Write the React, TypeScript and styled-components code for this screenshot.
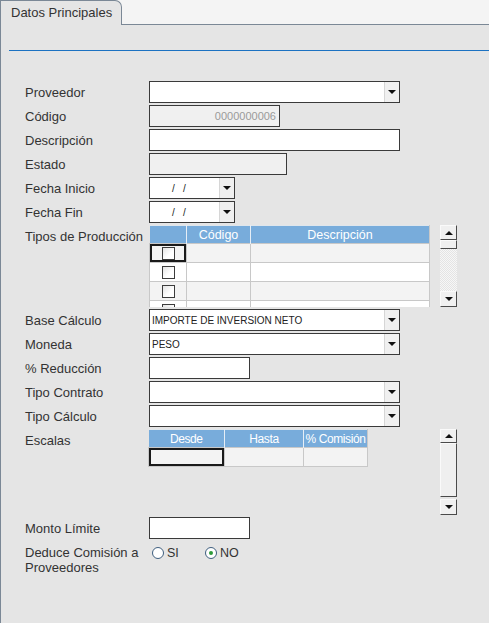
import { FC } from 'react';
import styled, { createGlobalStyle } from 'styled-components';

const GlobalStyle = createGlobalStyle`
  html, body {
    margin: 0;
    padding: 0;
    background: #e5e5e5;
  }
  body {
    font-family: 'Liberation Sans', Arial, sans-serif;
    color: #333;
  }
  * {
    box-sizing: border-box;
  }
`;

const Page = styled.div`
  width: 489px;
  min-height: 623px;
  display: flex;
  flex-direction: column;
`;

const TabStrip = styled.div`
  height: 25px;
  display: flex;
  align-items: flex-end;
  background: #f4f4f4;
  border-bottom: 1px solid #7b8896;
`;

const Tab = styled.div`
  width: 122px;
  height: 25px;
  margin-bottom: -1px;
  padding-left: 10px;
  background: #e5e5e5;
  border: 1px solid #7b8896;
  border-bottom: 0;
  border-top-right-radius: 7px;
  font-size: 13px;
  line-height: 24px;
  color: #333;
`;

const Panel = styled.div`
  flex: 1;
  min-height: 598px;
  background: #e5e5e5;
  border-left: 1px solid #7b8896;
  padding-top: 25px;
`;

const Rule = styled.div`
  height: 1px;
  margin-left: 8px;
  background: #1c72c2;
`;

const Form = styled.div`
  margin-top: 30px;
  padding-left: 24px;
  display: flex;
  flex-direction: column;
  gap: 2px;
`;

const Row = styled.div`
  display: flex;
  align-items: flex-start;
`;

const Label = styled.div`
  width: 124px;
  flex: none;
  font-size: 13px;
  line-height: 15px;
  padding-top: 4px;
  color: #333;
`;

const Box = styled.div<{ $w: number; $disabled?: boolean }>`
  width: ${({ $w }) => $w}px;
  height: 22px;
  display: flex;
  align-items: center;
  background: ${({ $disabled }) => ($disabled ? '#f0f0f0' : '#fff')};
  border: 1px solid #3a3a3a;
  font-size: 10px;
  color: #222;
  overflow: hidden;
`;

const BoxText = styled.div<{ $right?: boolean; $muted?: boolean; $pad?: number }>`
  flex: 1;
  padding: 0 ${({ $right }) => ($right ? 3 : 0)}px 0 ${({ $pad }) => $pad ?? 2}px;
  text-align: ${({ $right }) => ($right ? 'right' : 'left')};
  font-size: ${({ $muted }) => ($muted ? 11 : 10)}px;
  color: ${({ $muted }) => ($muted ? '#9a9a9a' : '#222')};
  white-space: pre;
`;

const DropButton = styled.div`
  width: 15px;
  height: 100%;
  flex: none;
  display: flex;
  align-items: center;
  justify-content: center;
  background: #f0f0f0;
  border-left: 1px solid #d6d6d6;
`;

const Arrow = styled.div<{ $up?: boolean }>`
  width: 0;
  height: 0;
  border-left: 4px solid transparent;
  border-right: 4px solid transparent;
  ${({ $up }) => ($up ? 'border-bottom: 4px solid #111;' : 'border-top: 4px solid #111;')}
`;

const Block = styled.div<{ $h: number }>`
  width: 308px;
  height: ${({ $h }) => $h}px;
  display: flex;
  justify-content: space-between;
  align-items: flex-start;
`;

const GridClip = styled.div<{ $w: number; $h: number; $shift?: number }>`
  width: ${({ $w }) => $w}px;
  height: ${({ $h }) => $h}px;
  margin-left: ${({ $shift }) => $shift ?? 0}px;
  overflow: hidden;
`;

const Table = styled.table<{ $size: number; $tight?: boolean }>`
  width: 100%;
  border-collapse: collapse;
  table-layout: fixed;
  font-size: ${({ $size }) => $size}px;
  letter-spacing: ${({ $tight }) => ($tight ? '-0.4px' : 'normal')};
`;

const Th = styled.th<{ $w?: number }>`
  width: ${({ $w }) => ($w ? `${$w}px` : 'auto')};
  height: 18px;
  padding: 0;
  background: #78acdb;
  color: #fff;
  font-weight: normal;
  text-align: center;
  border-right: 1px solid #e6eef6;
  border-top: 1px solid #dfe6ec;
  white-space: nowrap;
  &:last-child {
    border-right: 1px solid #c8c8c8;
  }
`;

const Td = styled.td<{ $alt?: boolean; $selected?: boolean }>`
  height: 19px;
  padding: 0;
  background: ${({ $alt }) => ($alt ? '#f3f3f3' : '#fff')};
  border: 1px solid #c8c8c8;
  text-align: center;
  ${({ $selected }) => $selected && 'box-shadow: inset 0 0 0 2px #1a1a1a;'}
`;

const Check = styled.div`
  width: 13px;
  height: 13px;
  margin: 0 auto;
  border: 1px solid #3c3c3c;
  background: linear-gradient(135deg, #e4e4e4, #ffffff 60%);
`;

const ScrollBar = styled.div<{ $h: number }>`
  width: 17px;
  height: ${({ $h }) => $h}px;
  display: flex;
  flex-direction: column;
`;

const ScrollButton = styled.div<{ $h: number }>`
  height: ${({ $h }) => $h}px;
  flex: none;
  display: flex;
  align-items: center;
  justify-content: center;
  background: #f0f0f0;
  border: 1px solid;
  border-color: #fafafa #4a4a4a #4a4a4a #fafafa;
`;

const Thumb = styled.div<{ $h?: number }>`
  ${({ $h }) => ($h ? `height: ${$h}px; flex: none;` : 'flex: 1;')}
  background: #efefef;
  border: 1px solid;
  border-color: #fafafa #4a4a4a #4a4a4a #fafafa;
`;

const Track = styled.div<{ $dotted?: boolean; $h?: number }>`
  ${({ $h }) => ($h ? `height: ${$h}px; flex: none;` : 'flex: 1;')}
  background: ${({ $dotted }) =>
    $dotted ? 'repeating-conic-gradient(#e4e4e4 0 25%, #f7f7f7 0 50%) 0 0 / 2px 2px' : 'transparent'};
`;

const RadioGroup = styled.div`
  display: flex;
  align-items: center;
  padding: 5px 0 0 3px;
  font-size: 12.5px;
  color: #333;
`;

const RadioItem = styled.label<{ $w: number }>`
  width: ${({ $w }) => $w}px;
  display: flex;
  align-items: center;
  gap: 3px;
`;

const RadioDot = styled.span<{ $on?: boolean }>`
  width: 12px;
  height: 12px;
  border-radius: 50%;
  border: 1px solid #3f5f7f;
  background: #fff;
  display: inline-flex;
  align-items: center;
  justify-content: center;
  &::after {
    content: '';
    width: 4px;
    height: 4px;
    border-radius: 50%;
    background: ${({ $on }) => ($on ? '#2e9a3a' : 'transparent')};
  }
`;

const Select: FC<{ w: number; value?: string; pad?: number }> = ({ w, value = '', pad }) => (
  <Box $w={w}>
    <BoxText $pad={pad}>{value}</BoxText>
    <DropButton>
      <Arrow />
    </DropButton>
  </Box>
);

const produccion = [0, 1, 2, 3];

export default function App() {
  return (
    <Page>
      <GlobalStyle />
      <TabStrip>
        <Tab>Datos Principales</Tab>
      </TabStrip>
      <Panel>
        <Rule />
        <Form>
          <Row>
            <Label>Proveedor</Label>
            <Select w={251} />
          </Row>
          <Row>
            <Label>Código</Label>
            <Box $w={131} $disabled>
              <BoxText $right $muted>0000000006</BoxText>
            </Box>
          </Row>
          <Row>
            <Label>Descripción</Label>
            <Box $w={251} />
          </Row>
          <Row>
            <Label>Estado</Label>
            <Box $w={138} $disabled />
          </Row>
          <Row>
            <Label>Fecha Inicio</Label>
            <Select w={86} value={'/   /'} pad={22} />
          </Row>
          <Row>
            <Label>Fecha Fin</Label>
            <Select w={86} value={'/   /'} pad={22} />
          </Row>
          <Row>
            <Label>Tipos de Producción</Label>
            <Block $h={82}>
              <GridClip $w={281} $h={82}>
                <Table $size={12.5}>
                  <thead>
                    <tr>
                      <Th $w={37}></Th>
                      <Th $w={64}>Código</Th>
                      <Th>Descripción</Th>
                    </tr>
                  </thead>
                  <tbody>
                    {produccion.map((i) => (
                      <tr key={i}>
                        <Td $alt={i % 2 === 0} $selected={i === 0}>
                          <Check />
                        </Td>
                        <Td $alt={i % 2 === 0} />
                        <Td $alt={i % 2 === 0} />
                      </tr>
                    ))}
                  </tbody>
                </Table>
              </GridClip>
              <ScrollBar $h={82}>
                <ScrollButton $h={15}>
                  <Arrow $up />
                </ScrollButton>
                <Thumb $h={9} />
                <Track $dotted />
                <ScrollButton $h={16}>
                  <Arrow />
                </ScrollButton>
              </ScrollBar>
            </Block>
          </Row>
          <Row>
            <Label>Base Cálculo</Label>
            <Select w={251} value="IMPORTE DE INVERSION NETO" />
          </Row>
          <Row>
            <Label>Moneda</Label>
            <Select w={251} value="PESO" />
          </Row>
          <Row>
            <Label>% Reducción</Label>
            <Box $w={101} />
          </Row>
          <Row>
            <Label>Tipo Contrato</Label>
            <Select w={251} />
          </Row>
          <Row>
            <Label>Tipo Cálculo</Label>
            <Select w={251} />
          </Row>
          <Row>
            <Label>Escalas</Label>
            <Block $h={86}>
              <GridClip $w={220} $h={38} $shift={-1}>
                <Table $size={12} $tight>
                  <thead>
                    <tr>
                      <Th $w={76}>Desde</Th>
                      <Th $w={79}>Hasta</Th>
                      <Th>% Comisión</Th>
                    </tr>
                  </thead>
                  <tbody>
                    <tr>
                      <Td $alt $selected />
                      <Td $alt />
                      <Td $alt />
                    </tr>
                  </tbody>
                </Table>
              </GridClip>
              <ScrollBar $h={86}>
                <ScrollButton $h={14}>
                  <Arrow $up />
                </ScrollButton>
                <Thumb />
                <Track $h={2} />
                <ScrollButton $h={16}>
                  <Arrow />
                </ScrollButton>
              </ScrollBar>
            </Block>
          </Row>
          <Row>
            <Label>Monto Límite</Label>
            <Box $w={101} />
          </Row>
          <Row>
            <Label>Deduce Comisión a Proveedores</Label>
            <RadioGroup>
              <RadioItem $w={53}>
                <RadioDot />
                SI
              </RadioItem>
              <RadioItem $w={40}>
                <RadioDot $on />
                NO
              </RadioItem>
            </RadioGroup>
          </Row>
        </Form>
      </Panel>
    </Page>
  );
}
